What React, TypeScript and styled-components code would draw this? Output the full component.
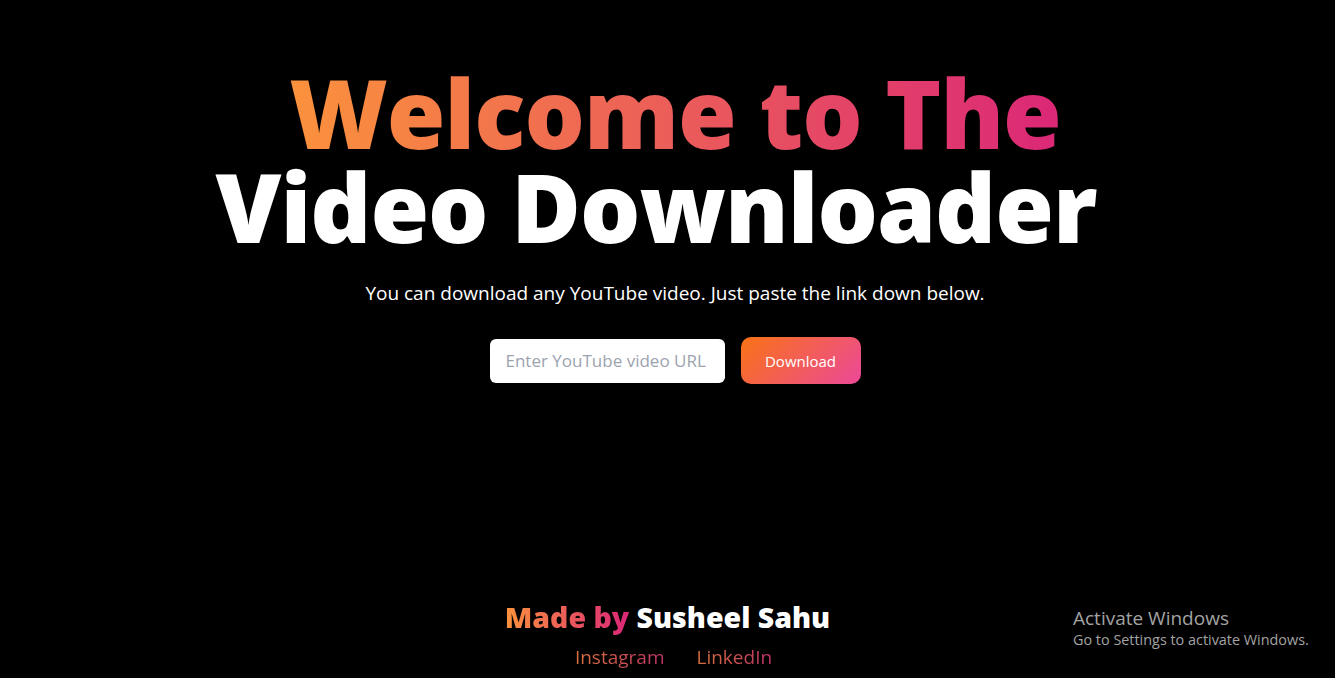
import React from "react";
import styled, { createGlobalStyle } from "styled-components";

const Global = createGlobalStyle`
  html, body { margin: 0; padding: 0; background: #000; }
  body { font-family: "Open Sans", "Noto Sans", sans-serif; color: #fff; }
  * { box-sizing: border-box; }
`;

const Page = styled.div`
  min-height: 100vh;
  display: flex;
  flex-direction: column;
  align-items: center;
  position: relative;
  overflow: hidden;
`;

const Hero = styled.main`
  display: flex;
  flex-direction: column;
  align-items: center;
  padding-top: 65px;
  padding-left: 15px;
`;

const Title = styled.h1`
  margin: 0;
  font-weight: 800;
  font-size: 95px;
  line-height: 94px;
  letter-spacing: -1px;
  text-align: center;
`;

const GradientLine = styled.span`
  display: inline-block;
  background: linear-gradient(90deg, #fb923c, #db2777);
  -webkit-background-clip: text;
  background-clip: text;
  color: transparent;
`;

const WhiteLine = styled.span`
  display: block;
  color: #fff;
  margin-left: -38px;
`;

const Subtitle = styled.p`
  margin: 27px 0 0;
  font-size: 19px;
  line-height: 26px;
  color: #fff;
`;

const Form = styled.form`
  display: flex;
  align-items: center;
  gap: 16px;
  margin-top: 31px;
`;

const Input = styled.input`
  width: 235px;
  height: 44px;
  border: none;
  border-radius: 6px;
  padding: 0 16px;
  font-family: inherit;
  font-size: 17px;
  outline: none;
  background: #fff;
  &::placeholder { color: #9ca3af; }
`;

const Button = styled.button`
  width: 120px;
  height: 47px;
  border: none;
  border-radius: 10px;
  background: linear-gradient(135deg, #f97316, #ec4899);
  color: #fff;
  font-family: inherit;
  font-size: 15px;
  cursor: pointer;
`;

const Footer = styled.footer`
  margin-top: auto;
  padding-bottom: 8px;
  display: flex;
  flex-direction: column;
  align-items: center;
`;

const Credit = styled.div`
  font-size: 28.5px;
  font-weight: 800;
  line-height: 36px;
`;

const Links = styled.div`
  display: flex;
  gap: 32px;
  margin-top: 9px;
  padding-left: 12px;
`;

const Link = styled.a`
  font-size: 19px;
  line-height: 26px;
  text-decoration: none;
  background: linear-gradient(90deg, #d8703c, #c03468);
  -webkit-background-clip: text;
  background-clip: text;
  color: transparent;
`;

const Watermark = styled.div`
  position: absolute;
  left: 1073px;
  top: 606px;
  font-family: "Open Sans", sans-serif;
  color: #a3a3a3;
`;

const WmTitle = styled.div`
  font-size: 19px;
  line-height: 24px;
`;

const WmText = styled.div`
  font-size: 14.4px;
  line-height: 20px;
`;

export default function App() {
  return (
    <>
      <Global />
      <Page>
        <Hero>
          <Title>
            <GradientLine>Welcome to The</GradientLine>
            <WhiteLine>Video Downloader</WhiteLine>
          </Title>
          <Subtitle>You can download any YouTube video. Just paste the link down below.</Subtitle>
          <Form onSubmit={(e) => e.preventDefault()}>
            <Input placeholder="Enter YouTube video URL" />
            <Button type="submit">Download</Button>
          </Form>
        </Hero>
        <Footer>
          <Credit>
            <GradientLine>Made by</GradientLine> Susheel Sahu
          </Credit>
          <Links>
            <Link href="#">Instagram</Link>
            <Link href="#">LinkedIn</Link>
          </Links>
        </Footer>
        <Watermark>
          <WmTitle>Activate Windows</WmTitle>
          <WmText>Go to Settings to activate Windows.</WmText>
        </Watermark>
      </Page>
    </>
  );
}
